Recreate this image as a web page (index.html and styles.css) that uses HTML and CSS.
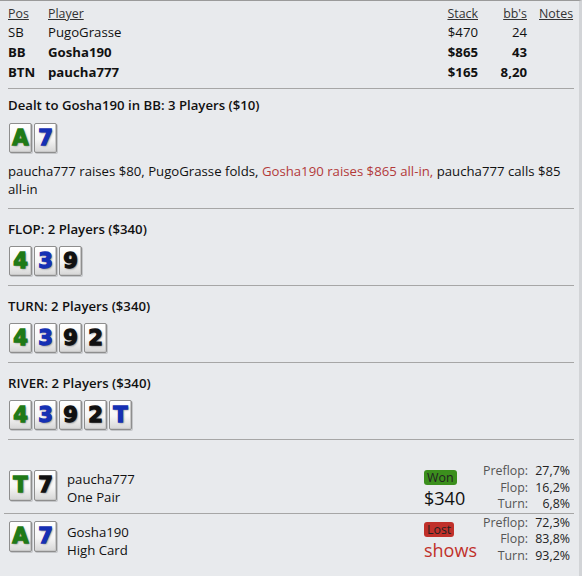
FILE: index.html
```html
<!DOCTYPE html>
<html>
<head>
<meta charset="utf-8">
<link rel="stylesheet" href="styles.css">
</head>
<body>
<div class="wrap">
  <div class="players">
    <div class="ph pos">Pos</div><div class="ph">Player</div><div class="ph num">Stack</div><div class="ph num">bb's</div><div class="ph notes">Notes</div>
    <div class="pos">SB</div><div>PugoGrasse</div><div class="num">$470</div><div class="num">24</div><div></div>
    <div class="pos b">BB</div><div class="b">Gosha190</div><div class="num b">$865</div><div class="num b">43</div><div></div>
    <div class="pos b">BTN</div><div class="b">paucha777</div><div class="num b">$165</div><div class="num b">8,20</div><div></div>
  </div>

  <div class="section first">
    <div class="title">Dealt to Gosha190 in BB: 3 Players ($10)</div>
    <div class="cards"><span class="card c">A</span><span class="card d">7</span></div>
    <p class="action"><span>paucha777 raises $80, PugoGrasse folds,</span> <span class="hero">Gosha190 raises $865 all-in,</span> <span>paucha777 calls $85</span> <span>all-in</span></p>
  </div>

  <div class="section">
    <div class="title">FLOP: 2 Players ($340)</div>
    <div class="cards"><span class="card c">4</span><span class="card d">3</span><span class="card s">9</span></div>
  </div>

  <div class="section">
    <div class="title">TURN: 2 Players ($340)</div>
    <div class="cards"><span class="card c">4</span><span class="card d">3</span><span class="card s">9</span><span class="card s">2</span></div>
  </div>

  <div class="section">
    <div class="title">RIVER: 2 Players ($340)</div>
    <div class="cards"><span class="card c">4</span><span class="card d">3</span><span class="card s">9</span><span class="card s">2</span><span class="card d">T</span></div>
  </div>

  <div class="showdown">
    <div class="sd-row">
      <div class="cards"><span class="card c">T</span><span class="card s">7</span></div>
      <div class="who"><div>paucha777</div><div>One Pair</div></div>
      <div class="result"><span class="badge won">Won</span><div class="amount">$340</div></div>
      <div class="eq">
        <span class="lbl">Preflop:</span><span class="val">27,7%</span>
        <span class="lbl">Flop:</span><span class="val">16,2%</span>
        <span class="lbl">Turn:</span><span class="val">6,8%</span>
      </div>
    </div>
    <div class="sd-row">
      <div class="cards"><span class="card c">A</span><span class="card d">7</span></div>
      <div class="who"><div>Gosha190</div><div>High Card</div></div>
      <div class="result"><span class="badge lost">Lost</span><div class="amount red">shows</div></div>
      <div class="eq">
        <span class="lbl">Preflop:</span><span class="val">72,3%</span>
        <span class="lbl">Flop:</span><span class="val">83,8%</span>
        <span class="lbl">Turn:</span><span class="val">93,2%</span>
      </div>
    </div>
  </div>
</div>
</body>
</html>
```

FILE: styles.css
```css
html, body {
  margin: 0;
  padding: 0;
  background: #e8eaed;
}
body {
  font-family: "Open Sans", "Noto Sans", sans-serif;
  font-size: 13.2px;
  color: #111;
  height: 576px;
  box-sizing: border-box;
  border-top: 1px solid #9a9a9a;
  border-right: 3px solid #d2d4d7;
  overflow: hidden;
}
.wrap {
  padding: 0 5px 0 8px;
}
.players {
  display: grid;
  grid-template-columns: 40px 1fr 60px 49px 47px;
  line-height: 20px;
  padding-top: 4px;
  padding-bottom: 6px;
  border-bottom: 1px solid #a6a6a6;
}
.players .ph {
  text-decoration: underline;
  color: #333;
  line-height: 17px;
  font-size: 12.4px;
}
.players .notes {
  padding-left: 12px;
}
.num {
  text-align: right;
}
.b {
  font-weight: 700;
}
.section {
  border-bottom: 1px solid #a6a6a6;
  padding: 11px 0 9px;
}
.section.first {
  padding-top: 7px;
  padding-bottom: 10px;
}
.title {
  font-weight: 600;
  line-height: 18px;
}
.cards {
  display: flex;
  gap: 2px;
  margin-top: 8px;
  padding-left: 1px;
}
.section.first .cards {
  margin-top: 9px;
}
.card {
  display: inline-flex;
  align-items: center;
  justify-content: center;
  width: 21px;
  height: 28px;
  border: 1px solid #8e8e8e;
  border-radius: 2px;
  background: linear-gradient(#ffffff 0%, #f6f6f6 55%, #d6d6d6 100%);
  font-family: "DejaVu Sans", sans-serif;
  font-weight: 900;
  font-size: 21px;
  line-height: 1;
  -webkit-text-stroke: 1.3px currentColor;
  text-shadow: 1px 1px 2px rgba(0,0,0,0.55);
  box-shadow: inset -1px -1px 0 #c8c8c8, 1px 1px 0 #c4c6c9;
}
.card.c { color: #1f7a17; }
.card.d { color: #1530b4; }
.card.s { color: #111; }
.action {
  margin: 9px 0 0;
  line-height: 18px;
}
.hero {
  color: #b33a3a;
}
.showdown {
  padding-top: 23px;
}
.sd-row {
  display: grid;
  grid-template-columns: 59px 1fr 58px 92px;
  align-items: start;
}
.sd-row + .sd-row {
  border-top: 1px solid #a6a6a6;
  margin-left: -4px;
  padding-left: 4px;
  padding-top: 1px;
}
.sd-row .cards {
  margin-top: 7px;
}
.sd-row + .sd-row .cards {
  margin-top: 6px;
}
.sd-row .card {
  height: 29px;
}
.who {
  line-height: 18px;
  padding-top: 7px;
}
.sd-row + .sd-row .who {
  padding-top: 8px;
}
.result {
  padding-top: 5px;
}
.badge {
  display: inline-block;
  padding: 0 3px;
  line-height: 15px;
  border-radius: 3px;
  color: #222;
  font-size: 12.4px;
}
.badge.won { background: #3b8f1d; }
.badge.lost { background: #c0302a; }
.amount {
  font-size: 18px;
  line-height: 25px;
  color: #111;
}
.amount.red {
  color: #c0302a;
}
.eq {
  display: grid;
  grid-template-columns: 1fr 42px;
  line-height: 16.5px;
  font-size: 12.4px;
  padding-right: 4px;
}
.eq .lbl {
  text-align: right;
  color: #555;
}
.eq .val {
  text-align: right;
  color: #222;
}
```
